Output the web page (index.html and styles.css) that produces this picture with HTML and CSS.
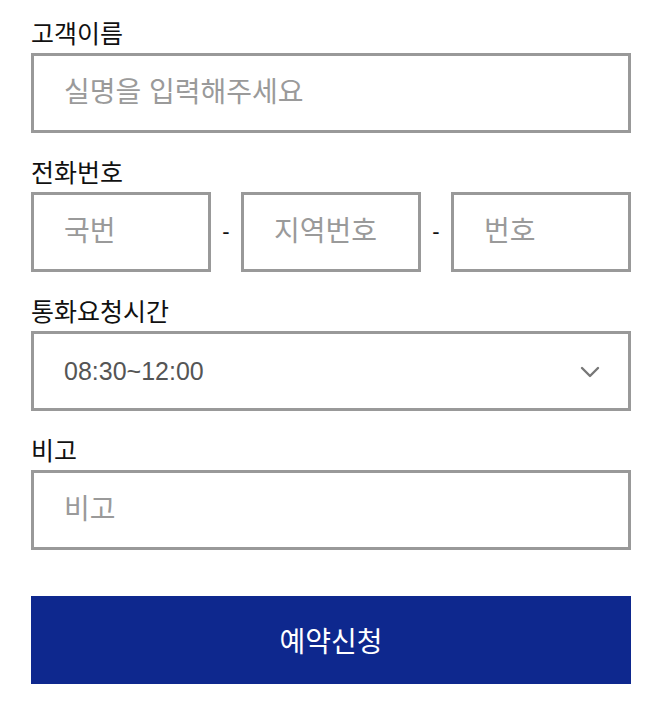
FILE: index.html
```html
<!DOCTYPE html>
<html lang="ko">
<head>
  <meta charset="UTF-8">
  <meta name="viewport" content="width=device-width, initial-scale=1.0">
  <title>예약신청</title>
  <link rel="stylesheet" href="styles.css">
</head>
<body>
  <form class="form">
    <div class="group">
      <label class="label" for="name">고객이름</label>
      <input class="field" id="name" type="text" placeholder="실명을 입력해주세요">
    </div>
    <div class="group">
      <label class="label" for="tel1">전화번호</label>
      <div class="phone">
        <input class="field" id="tel1" type="text" placeholder="국번">
        <span class="dash">-</span>
        <input class="field" type="text" placeholder="지역번호">
        <span class="dash">-</span>
        <input class="field" type="text" placeholder="번호">
      </div>
    </div>
    <div class="group">
      <label class="label" for="time">통화요청시간</label>
      <div class="select-wrap">
        <select class="field select" id="time">
          <option>08:30~12:00</option>
          <option>13:00~18:00</option>
        </select>
        <svg class="chevron" width="20" height="12" viewBox="0 0 20 12">
          <path d="M2 2 L10 10 L18 2" fill="none" stroke="#777" stroke-width="2.4" stroke-linecap="round" stroke-linejoin="round"/>
        </svg>
      </div>
    </div>
    <div class="group">
      <label class="label" for="memo">비고</label>
      <input class="field" id="memo" type="text" placeholder="비고">
    </div>
    <button class="submit" type="button">예약신청</button>
  </form>
</body>
</html>
```
FILE: styles.css
```css
* {
  box-sizing: border-box;
}
body {
  margin: 0;
  padding: 19px 19px 0 31px;
  background: #fff;
  font-family: "Liberation Sans", "Noto Sans CJK KR", sans-serif;
  color: #111;
}
.form {
  width: 600px;
}
.group {
  margin-bottom: 25px;
}
.label {
  display: block;
  font-size: 25px;
  line-height: 30px;
  margin-bottom: 4px;
  color: #111;
}
.field {
  display: block;
  width: 100%;
  height: 80px;
  border: 3px solid #999;
  border-radius: 0;
  background: #fff;
  padding: 0 30px;
  font-family: "Liberation Sans", "Noto Sans CJK KR", sans-serif;
  font-size: 28px;
  color: #555;
  outline: none;
}
.field::placeholder {
  color: #9a9a9a;
}
.phone {
  display: grid;
  grid-template-columns: 1fr 30px 1fr 30px 1fr;
  align-items: center;
}
.dash {
  text-align: center;
  font-size: 22px;
  color: #111;
}
.select-wrap {
  position: relative;
}
.select {
  appearance: none;
  -webkit-appearance: none;
  font-size: 25px;
}
.chevron {
  position: absolute;
  right: 31px;
  top: 35px;
  pointer-events: none;
}
.submit {
  display: block;
  width: 600px;
  height: 88px;
  margin-top: 46px;
  border: none;
  background: #0e288e;
  color: #fff;
  font-family: "Liberation Sans", "Noto Sans CJK KR", sans-serif;
  font-size: 28px;
  cursor: pointer;
}
```
